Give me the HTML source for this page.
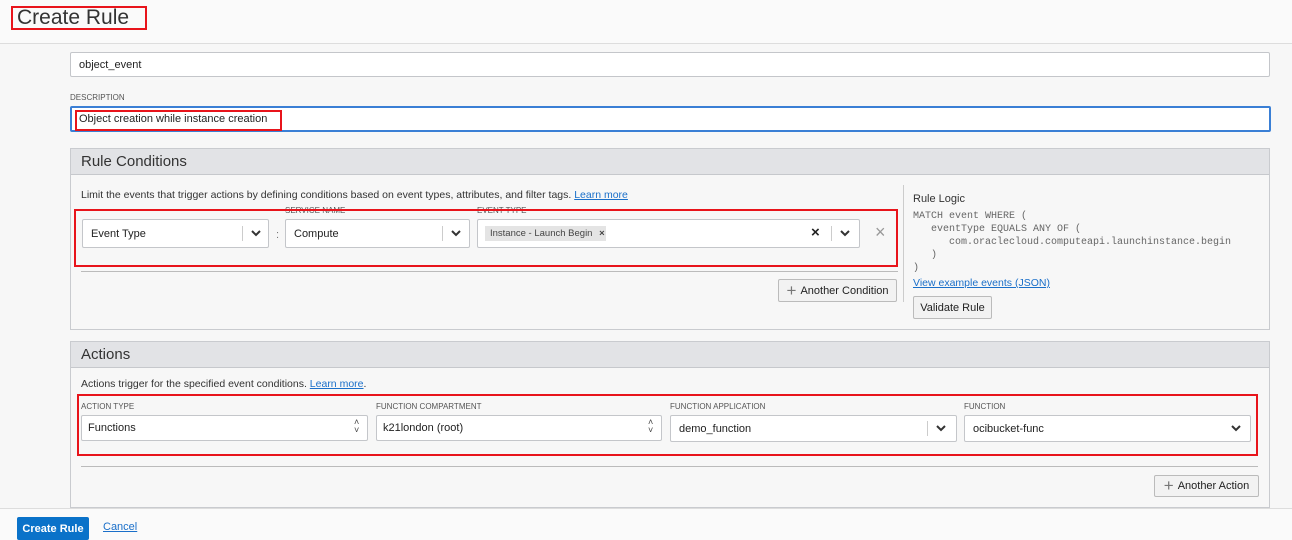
<!DOCTYPE html>
<html><head><style>
*{box-sizing:border-box;margin:0;padding:0}
body{width:1292px;height:540px;background:#f7f7f7;font-family:"Liberation Sans",sans-serif;color:#333;position:relative;overflow:hidden}
.a{position:absolute}
.inp{position:absolute;background:#fff;border:1px solid #c4c6ca;border-radius:2px;font-size:11px;color:#222;padding-left:8px;display:flex;align-items:center}
.red{position:absolute;border:2px solid #e8141b}
.lbl{position:absolute;font-size:8px;color:#555;letter-spacing:0}
.btn{position:absolute;background:#f2f2f2;border:1px solid #bbb;border-radius:2px;font-size:11px;color:#222;display:flex;align-items:center;justify-content:center}
.panel{position:absolute;border:1px solid #c9cbcf;background:#f7f7f7}
.ph{position:absolute;left:0;right:0;top:0;background:#e2e3e6;border-bottom:1px solid #c6c8cc;font-size:15px;color:#333;padding-left:10px;display:flex;align-items:center}
.chev{position:absolute;width:12px;height:8px}
.div{position:absolute;width:1px;background:#ccc}
a{color:#1a6fc9;text-decoration:underline}
.mono{font-family:"Liberation Mono",monospace;font-size:10px;color:#666;position:absolute;white-space:pre}
</style></head><body>
<svg width="0" height="0" style="position:absolute"><defs><symbol id="cv" viewBox="0 0 12 8"><path d="M2 2 L6 6 L10 2" fill="none" stroke="#333" stroke-width="2"/></symbol></defs></svg>
<div class="a" style="left:0;top:0;width:1292px;height:44px;background:#fafafa;border-bottom:1px solid #ddd"></div>
<div class="a" style="left:17px;top:6px;font-size:21px;color:#333">Create Rule</div>
<div class="red" style="left:11px;top:6px;width:136px;height:24px"></div>

<div class="inp" style="left:70px;top:52px;width:1200px;height:25px">object_event</div>
<div class="lbl" style="left:70px;top:93px">DESCRIPTION</div>
<div class="inp" style="left:70px;top:106px;width:1201px;height:26px;border:2px solid #3a7fd5;padding-left:7px">Object creation while instance creation</div>
<div class="red" style="left:75px;top:110px;width:207px;height:21px"></div>

<div class="panel" style="left:70px;top:148px;width:1200px;height:182px">
 <div class="ph" style="height:26px">Rule Conditions</div>
</div>
<div class="a" style="left:81px;top:189px;font-size:10.5px;color:#333">Limit the events that trigger actions by defining conditions based on event types, attributes, and filter tags. <a>Learn more</a></div>
<div class="lbl" style="left:285px;top:206px">SERVICE NAME</div>
<div class="lbl" style="left:477px;top:206px">EVENT TYPE</div>
<div class="inp" style="left:82px;top:219px;width:187px;height:29px">Event Type</div>
<div class="div" style="left:242px;top:226px;height:15px"></div><svg class="chev" style="left:250px;top:229px"><use href="#cv"/></svg>
<div class="a" style="left:276px;top:229px;font-size:11px;color:#777">:</div>
<div class="inp" style="left:285px;top:219px;width:185px;height:29px">Compute</div>
<div class="div" style="left:442px;top:226px;height:15px"></div><svg class="chev" style="left:450px;top:229px"><use href="#cv"/></svg>
<div class="inp" style="left:477px;top:219px;width:383px;height:29px"></div>
<div class="a" style="left:485px;top:226px;width:121px;height:15px;background:#e4e4e4;font-size:9.5px;color:#444;padding:2px 0 0 5px">Instance - Launch Begin <b style="margin-left:4px">×</b></div>
<div class="a" style="left:811px;top:224px;font-size:15px;font-weight:bold;color:#222">×</div>
<div class="div" style="left:831px;top:226px;height:15px"></div><svg class="chev" style="left:839px;top:229px"><use href="#cv"/></svg>
<div class="a" style="left:875px;top:222px;font-size:18px;color:#999">×</div>
<div class="red" style="left:74px;top:209px;width:824px;height:58px"></div>
<div class="a" style="left:81px;top:271px;width:817px;height:1px;background:#bbb"></div>
<div class="btn" style="left:778px;top:279px;width:119px;height:23px"><span style="font-size:17px;color:#777;margin-right:4px">+</span>Another Condition</div>
<div class="div" style="left:903px;top:185px;height:117px"></div>
<div class="a" style="left:913px;top:193px;font-size:11px;color:#333">Rule Logic</div>
<div class="mono" style="left:913px;top:211px">MATCH event WHERE (</div>
<div class="mono" style="left:913px;top:224px">   eventType EQUALS ANY OF (</div>
<div class="mono" style="left:913px;top:237px">      com.oraclecloud.computeapi.launchinstance.begin</div>
<div class="mono" style="left:913px;top:250px">   )</div>
<div class="mono" style="left:913px;top:263px">)</div>
<div class="a" style="left:913px;top:277px;font-size:10.5px"><a>View example events (JSON)</a></div>
<div class="btn" style="left:913px;top:296px;width:79px;height:23px">Validate Rule</div>

<div class="panel" style="left:70px;top:341px;width:1200px;height:167px">
 <div class="ph" style="height:26px">Actions</div>
</div>
<div class="a" style="left:81px;top:378px;font-size:10.5px">Actions trigger for the specified event conditions. <a>Learn more</a>.</div>
<div class="lbl" style="left:81px;top:402px">ACTION TYPE</div>
<div class="lbl" style="left:376px;top:402px">FUNCTION COMPARTMENT</div>
<div class="lbl" style="left:670px;top:402px">FUNCTION APPLICATION</div>
<div class="lbl" style="left:964px;top:402px">FUNCTION</div>
<div class="inp" style="left:81px;top:415px;width:287px;height:26px;padding-left:6px">Functions</div>
<div class="a" style="left:354px;top:418px;font-size:9px;line-height:8px;color:#444">˄<br>˅</div>
<div class="inp" style="left:376px;top:415px;width:286px;height:26px;padding-left:6px">k21london (root)</div>
<div class="a" style="left:648px;top:418px;font-size:9px;line-height:8px;color:#444">˄<br>˅</div>
<div class="inp" style="left:670px;top:415px;width:287px;height:27px">demo_function</div>
<div class="div" style="left:927px;top:421px;height:15px"></div><svg class="chev" style="left:935px;top:424px"><use href="#cv"/></svg>
<div class="inp" style="left:964px;top:415px;width:287px;height:27px">ocibucket-func</div>
<svg class="chev" style="left:1230px;top:424px"><use href="#cv"/></svg>
<div class="red" style="left:77px;top:394px;width:1181px;height:62px"></div>
<div class="a" style="left:81px;top:466px;width:1177px;height:1px;background:#bbb"></div>
<div class="btn" style="left:1154px;top:475px;width:105px;height:22px"><span style="font-size:17px;color:#777;margin-right:4px">+</span>Another Action</div>

<div class="a" style="left:0;top:508px;width:1292px;height:32px;background:#fafafa;border-top:1px solid #ddd"></div>
<div class="a" style="left:17px;top:517px;width:72px;height:23px;background:#0a72c9;border-radius:2px;color:#fff;font-size:11px;font-weight:bold;display:flex;align-items:center;justify-content:center">Create Rule</div>
<div class="a" style="left:103px;top:521px;font-size:11px"><a>Cancel</a></div>
</body></html>
